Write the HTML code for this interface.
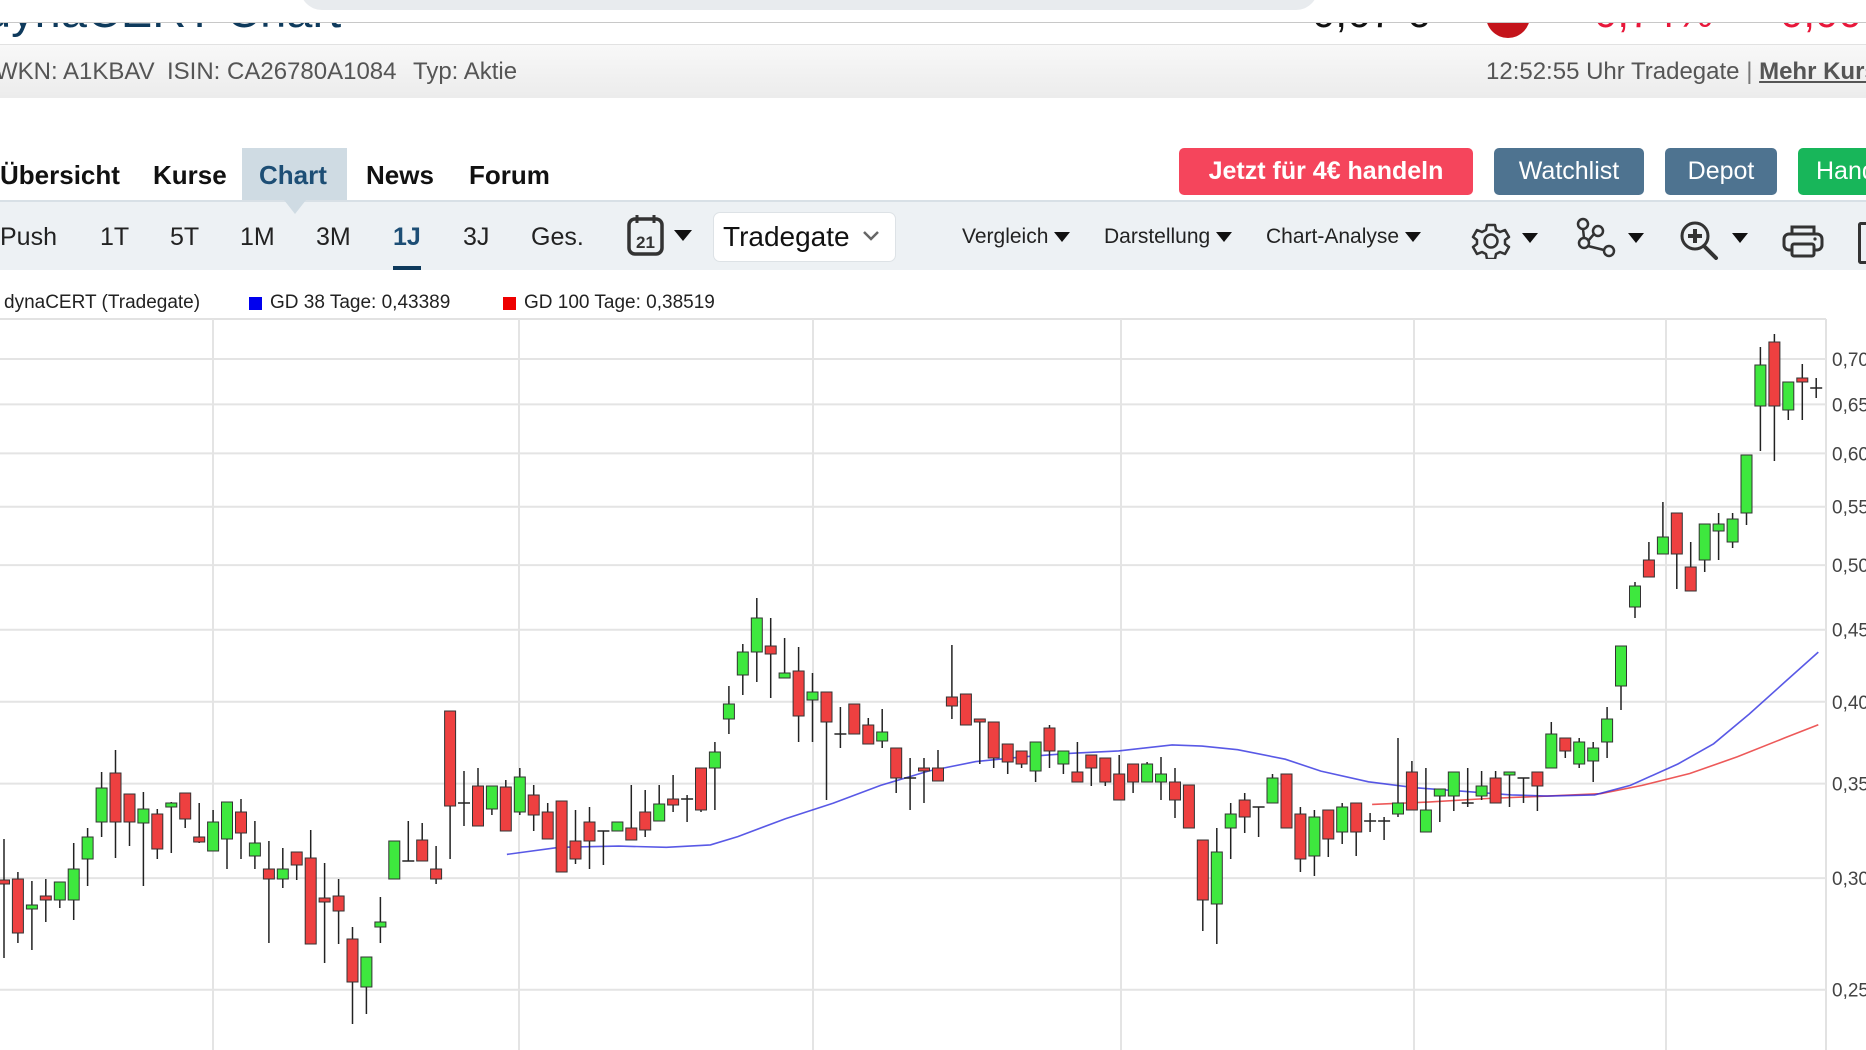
<!DOCTYPE html>
<html><head><meta charset="utf-8">
<style>
html,body{margin:0;padding:0;}
body{width:1866px;height:1050px;overflow:hidden;position:relative;background:#fff;font-family:"Liberation Sans",Arial,sans-serif;}
.a{position:absolute;white-space:nowrap;}
.tab{position:absolute;top:158px;font-size:26px;font-weight:bold;color:#111;line-height:34px;}
.tb{position:absolute;top:222px;font-size:25px;color:#222;line-height:30px;}
.tr{position:absolute;top:224px;font-size:21px;color:#222;line-height:26px;}
.btn{position:absolute;top:148px;height:47px;border-radius:5px;color:#fff;font-size:25px;line-height:47px;text-align:center;}
.tri{display:inline-block;width:0;height:0;border-left:8px solid transparent;border-right:8px solid transparent;border-top:10px solid #111;vertical-align:middle;margin-left:6px;}
</style></head><body>
<div class="a" style="left:300px;top:-20px;width:1018px;height:30px;background:#e8ebee;border-radius:0 0 22px 22px;"></div>
<div class="a" style="left:0;top:22px;width:1866px;height:22px;overflow:hidden;">
  <div class="a" style="left:-15px;top:-38px;font-size:47px;color:#0e3a5c;line-height:54px;">dynaCERT Chart</div>
  <div class="a" style="left:1312px;top:-33px;font-size:42px;color:#111;line-height:48px;">0,67 €</div>
  <div class="a" style="left:1486px;top:-28px;width:44px;height:44px;border-radius:50%;background:#c4141b;"></div>
  <div class="a" style="left:1594px;top:-33px;font-size:42px;color:#e8173a;line-height:48px;">0,74%</div>
  <div class="a" style="left:1780px;top:-33px;font-size:42px;color:#e8173a;line-height:48px;">0,00</div>
</div>
<div class="a" style="left:0;top:22px;width:1866px;height:1px;background:#c8c8c8;"></div>
<div class="a" style="left:0;top:44px;width:1866px;height:53px;background:linear-gradient(#f8f8f8,#ececec);border-top:1px solid #e2e2e2;"></div>
<div class="a" style="left:-5px;top:58px;font-size:24px;color:#555;line-height:28px;">WKN: A1KBAV</div>
<div class="a" style="left:167px;top:58px;font-size:24px;color:#555;line-height:28px;">ISIN: CA26780A1084</div>
<div class="a" style="left:413px;top:58px;font-size:24px;color:#555;line-height:28px;">Typ: Aktie</div>
<div class="a" style="left:1486px;top:58px;font-size:24px;color:#555;line-height:28px;">12:52:55 Uhr Tradegate <span style="color:#777">|</span> <b style="text-decoration:underline;color:#555">Mehr Kurse</b></div>
<div class="a" style="left:242px;top:148px;width:105px;height:52px;background:#cfdbe3;"></div>
<div class="a" style="left:284px;top:200px;width:0;height:0;border-left:11px solid transparent;border-right:11px solid transparent;border-top:14px solid #cfdbe3;z-index:3;"></div>
<div class="tab" style="left:0;">Übersicht</div>
<div class="tab" style="left:153px;">Kurse</div>
<div class="tab" style="left:259px;color:#1d4e75;">Chart</div>
<div class="tab" style="left:366px;">News</div>
<div class="tab" style="left:469px;">Forum</div>
<div class="btn" style="left:1179px;width:294px;background:#f5455c;font-weight:bold;">Jetzt für 4€ handeln</div>
<div class="btn" style="left:1494px;width:150px;background:#4e7390;">Watchlist</div>
<div class="btn" style="left:1665px;width:112px;background:#4e7390;">Depot</div>
<div class="btn" style="left:1798px;width:100px;background:#18b65a;text-align:left;padding-left:18px;">Handeln</div>
<div class="a" style="left:0;top:200px;width:1866px;height:70px;background:#edf1f4;border-top:2px solid #d8e0e6;box-sizing:border-box;"></div>
<div class="tb" style="left:0;">Push</div>
<div class="tb" style="left:100px;">1T</div>
<div class="tb" style="left:170px;">5T</div>
<div class="tb" style="left:240px;">1M</div>
<div class="tb" style="left:316px;">3M</div>
<div class="tb" style="left:393px;color:#1d4e75;font-weight:bold;">1J</div>
<div class="a" style="left:393px;top:266px;width:28px;height:4px;background:#0e3a5c;"></div>
<div class="tb" style="left:463px;">3J</div>
<div class="tb" style="left:531px;">Ges.</div>
<svg class="a" style="left:626px;top:212px;" width="40" height="46" viewBox="0 0 40 46"><rect x="3" y="7" width="33" height="35" rx="6" fill="none" stroke="#333" stroke-width="3.5"/><line x1="11" y1="3" x2="11" y2="11" stroke="#333" stroke-width="3"/><line x1="28" y1="3" x2="28" y2="11" stroke="#333" stroke-width="3"/><line x1="15" y1="7" x2="24" y2="7" stroke="#333" stroke-width="3"/><text x="19.5" y="36" font-size="17" font-weight="bold" text-anchor="middle" fill="#333" font-family="Liberation Sans,sans-serif">21</text></svg>
<div class="a" style="left:674px;top:230px;width:0;height:0;border-left:9px solid transparent;border-right:9px solid transparent;border-top:11px solid #111;"></div>
<div class="a" style="left:713px;top:212px;width:183px;height:50px;background:#fff;border:1px solid #dde2e6;border-radius:7px;box-sizing:border-box;"></div>
<div class="a" style="left:723px;top:220px;font-size:28px;color:#111;line-height:34px;">Tradegate</div>
<svg class="a" style="left:862px;top:230px;" width="18" height="12" viewBox="0 0 18 12"><path d="M2 2 L9 9 L16 2" fill="none" stroke="#666" stroke-width="2.5"/></svg>
<div class="tr" style="left:962px;">Vergleich<span class="tri"></span></div>
<div class="tr" style="left:1104px;">Darstellung<span class="tri"></span></div>
<div class="tr" style="left:1266px;">Chart-Analyse<span class="tri"></span></div>
<svg class="a" style="left:1470px;top:223px;" width="42" height="36" viewBox="0 0 42 36"><path d="M17 2h8l1 5 4 2 5-2 4 7-4 3v4l4 3-4 7-5-2-4 2-1 5h-8l-1-5-4-2-5 2-4-7 4-3v-4l-4-3 4-7 5 2 4-2z" fill="none" stroke="#333" stroke-width="2.5" stroke-linejoin="round"/><circle cx="21" cy="18" r="6.5" fill="none" stroke="#333" stroke-width="2.5"/></svg>
<div class="a" style="left:1522px;top:233px;width:0;height:0;border-left:8px solid transparent;border-right:8px solid transparent;border-top:10px solid #111;"></div>
<svg class="a" style="left:1576px;top:217px;" width="42" height="42" viewBox="0 0 42 42"><circle cx="7" cy="7" r="5" fill="none" stroke="#333" stroke-width="2.5"/><circle cx="22" cy="14" r="5" fill="none" stroke="#333" stroke-width="2.5"/><circle cx="8" cy="26" r="5" fill="none" stroke="#333" stroke-width="2.5"/><circle cx="33" cy="34" r="5" fill="none" stroke="#333" stroke-width="2.5"/><path d="M7 12 L8 21 M12 24 L18 17 M12 29 L28 33" stroke="#333" stroke-width="2.5"/></svg>
<div class="a" style="left:1628px;top:233px;width:0;height:0;border-left:8px solid transparent;border-right:8px solid transparent;border-top:10px solid #111;"></div>
<svg class="a" style="left:1679px;top:220px;" width="44" height="40" viewBox="0 0 44 40"><circle cx="16" cy="16" r="13" fill="none" stroke="#333" stroke-width="3"/><path d="M16 9v14M9 16h14" stroke="#333" stroke-width="4"/><path d="M25 26l12 12" stroke="#333" stroke-width="4" stroke-linecap="round"/></svg>
<div class="a" style="left:1732px;top:233px;width:0;height:0;border-left:8px solid transparent;border-right:8px solid transparent;border-top:10px solid #111;"></div>
<svg class="a" style="left:1782px;top:224px;" width="42" height="34" viewBox="0 0 42 34"><path d="M10 10V3h22v7" fill="none" stroke="#333" stroke-width="3"/><rect x="2" y="10" width="38" height="16" rx="5" fill="none" stroke="#333" stroke-width="3"/><rect x="10" y="20" width="22" height="12" rx="2" fill="#edf1f4" stroke="#333" stroke-width="3"/><circle cx="33" cy="15" r="1.6" fill="#333"/></svg>
<div class="a" style="left:1858px;top:222px;width:6px;height:36px;border:3px solid #333;border-right:none;border-radius:3px 0 0 3px;"></div>
<div class="a" style="left:4px;top:292px;font-size:19px;color:#222;line-height:22px;">dynaCERT (Tradegate)</div>
<div class="a" style="left:249px;top:297px;width:13px;height:13px;background:#0000ee;"></div>
<div class="a" style="left:270px;top:292px;font-size:19px;color:#222;line-height:22px;">GD 38 Tage: 0,43389</div>
<div class="a" style="left:503px;top:297px;width:13px;height:13px;background:#ee0000;"></div>
<div class="a" style="left:524px;top:292px;font-size:19px;color:#222;line-height:22px;">GD 100 Tage: 0,38519</div>
<svg id="ch" class="a" style="left:0;top:0;" width="1866" height="1050" viewBox="0 0 1866 1050"></svg>
<script>
(function(){
var s=document.getElementById('ch'),h='';
function Y(v){return 359+(Math.log(0.7)-Math.log(v))*612.6;}
h+='<line x1="0" y1="319" x2="1826" y2="319" stroke="#e2e2e2" stroke-width="2"/>';
[213,519,813,1121,1414,1666].forEach(function(x){h+='<line x1="'+x+'" y1="319" x2="'+x+'" y2="1050" stroke="#e4e4e4" stroke-width="2"/>';});
h+='<line x1="1826" y1="319" x2="1826" y2="1050" stroke="#e2e2e2" stroke-width="2"/>';
[0.25,0.30,0.35,0.40,0.45,0.50,0.55,0.60,0.65,0.70].forEach(function(v){var y=Y(v).toFixed(1);
h+='<line x1="0" y1="'+y+'" x2="1826" y2="'+y+'" stroke="#e4e4e4" stroke-width="2"/>';
h+='<text x="1832" y="'+(+y+7)+'" font-size="19" fill="#444" font-family="Liberation Sans,Arial,sans-serif">'+v.toFixed(2).replace('.',',')+'</text>';});
function pl(p,c){var d=p.map(function(q){return (q[0]*1.19).toFixed(1)+','+(q[1]*1.19).toFixed(1);}).join(' ');return '<polyline points="'+d+'" fill="none" stroke="'+c+'" stroke-width="1.6" opacity="0.8"/>';}
h+=pl([[1153,676],[1200,674],[1250,671],[1300,669],[1345,667],[1380,660],[1420,650],[1460,636],[1500,620],[1528,609]],'#e83030');
h+=pl([[426,718],[470,712],[520,711],[560,712],[597,710],[620,703],[660,688],[700,675],[740,660],[780,648],[820,640],[860,636],[900,633],[940,631],[985,626],[1010,627],[1040,630],[1080,638],[1110,648],[1150,657],[1190,662],[1230,665],[1270,668],[1300,669],[1340,668],[1370,660],[1410,642],[1440,625],[1470,600],[1500,573],[1528,548]],'#3030e0');
var C=[
[880,884,839,958,'r'],[879,933,872,943,'r'],[905,909,881,950,'g'],[896,900,879,922,'r'],[882,900,882,908,'g'],
[869,900,843,920,'g'],[837,859,828,886,'g'],[788,822,772,837,'g'],[773,822,750,858,'r'],[794,822,794,846,'r'],
[809,823,792,886,'g'],[814,849,809,859,'r'],[803,807,802,853,'g'],[793,819,793,828,'r'],[837,842,803,843,'r'],
[822,851,810,851,'g'],[802,839,802,869,'g'],[812,833,799,859,'r'],[843,856,821,869,'g'],[869,879,841,943,'r'],
[869,879,848,888,'g'],[852,865,852,880,'r'],[858,944,830,944,'r'],[898,902,863,963,'r'],[896,911,879,944,'r'],
[939,982,927,1024,'r'],[957,987,957,1014,'g'],[922,927,897,943,'g'],[841,879,841,879,'g'],[861,861,821,861,'d'],
[840,861,823,861,'r'],[869,879,846,884,'r'],[711,806,711,859,'r'],[803,803,771,826,'d'],[786,826,768,826,'r'],
[786,809,786,815,'g'],[787,831,780,831,'r'],[777,812,768,815,'g'],[795,815,785,831,'r'],[812,839,803,839,'r'],
[801,872,801,872,'r'],[841,859,810,864,'r'],[822,841,807,869,'r'],[831,831,831,865,'d'],[822,831,822,831,'g'],
[828,840,785,840,'r'],[812,830,790,837,'r'],[804,821,785,821,'g'],[799,805,775,812,'r'],[799,799,795,822,'d'],
[768,810,768,812,'r'],[752,768,742,810,'g'],[704,719,686,734,'g'],[652,675,644,695,'g'],[618,652,598,682,'g'],
[646,654,618,698,'r'],[673,678,638,678,'g'],[671,716,647,742,'r'],[692,700,673,742,'g'],[692,722,692,800,'r'],
[734,734,707,748,'d'],[704,734,704,734,'r'],[725,744,718,744,'r'],[732,741,709,748,'g'],[748,778,748,793,'r'],
[778,778,758,810,'d'],[768,771,758,803,'r'],[768,781,750,781,'r'],[697,706,645,719,'r'],[694,725,694,725,'r'],
[719,722,719,764,'r'],[722,758,722,768,'r'],[744,762,744,774,'r'],[751,764,751,768,'r'],[742,771,742,782,'g'],
[728,751,725,768,'r'],[751,764,751,774,'g'],[772,782,742,782,'r'],[755,768,755,786,'r'],[758,782,758,786,'r'],
[774,800,755,800,'r'],[764,782,764,793,'r'],[764,782,762,782,'g'],[774,782,757,800,'g'],[782,800,768,818,'r'],
[785,828,785,828,'r'],[840,900,840,931,'r'],[852,904,828,944,'g'],[814,828,803,859,'g'],[800,817,793,833,'r'],
[807,807,807,837,'d'],[778,803,774,803,'g'],[774,828,774,828,'r'],[814,859,807,872,'r'],[817,856,810,876,'g'],
[810,839,810,857,'r'],[807,832,803,844,'g'],[803,832,803,856,'r'],[821,821,813,832,'d'],[821,821,817,840,'d'],
[803,814,738,817,'g'],[772,810,761,810,'r'],[810,832,768,832,'g'],[789,796,789,822,'g'],[772,796,772,811,'g'],
[803,803,768,807,'d'],[786,796,771,800,'g'],[778,803,771,803,'r'],[772,774,772,807,'g'],[778,778,778,803,'d'],
[772,786,772,811,'r'],[734,768,722,768,'g'],[738,751,738,758,'r'],[742,764,738,768,'g'],[748,761,742,782,'g'],
[719,742,707,758,'g'],[646,686,646,710,'g'],[586,607,582,618,'g'],[560,577,542,577,'r'],[537,554,502,554,'g'],
[513,554,513,589,'r'],[567,591,542,591,'r'],[524,560,524,572,'g'],[524,531,513,560,'g'],[519,542,513,548,'g'],
[455,513,455,525,'g'],[365,406,347,451,'g'],[342,406,334,461,'r'],[382,410,382,420,'g'],[378,382,364,420,'r'],
[388,388,378,398,'d']];
C.forEach(function(c,i){var x=4+13.94*i;
h+='<line x1="'+x.toFixed(1)+'" y1="'+c[2]+'" x2="'+x.toFixed(1)+'" y2="'+c[3]+'" stroke="#222" stroke-width="1.5"/>';
if(c[4]=='d'){h+='<line x1="'+(x-6).toFixed(1)+'" y1="'+c[0]+'" x2="'+(x+6).toFixed(1)+'" y2="'+c[0]+'" stroke="#222" stroke-width="1.5"/>';}
else{var bh=Math.max(c[1]-c[0],3);h+='<rect x="'+(x-5.5).toFixed(1)+'" y="'+c[0]+'" width="11" height="'+bh+'" fill="'+(c[4]=='g'?'#3ee83e':'#ee4040')+'" stroke="#333" stroke-width="1"/>';}
});
s.innerHTML=h;
})();
</script>
</body></html>
